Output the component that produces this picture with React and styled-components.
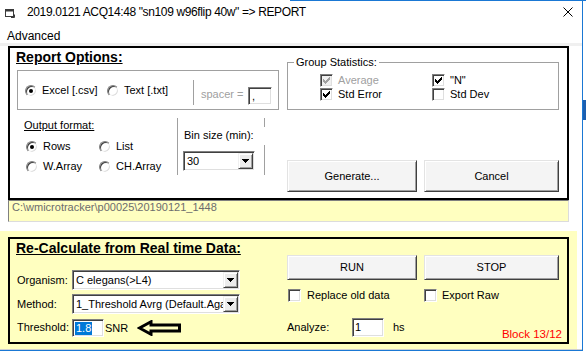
import React from 'react';
import styled, { createGlobalStyle } from 'styled-components';

const BLUE = '#1a78d4';
const YELLOW = '#ffffc0';

const GlobalStyle = createGlobalStyle`
  html, body { margin: 0; padding: 0; background: #fff; }
  body {
    font-family: "Liberation Sans", Arial, sans-serif;
    font-size: 11px;
    line-height: 13px;
    color: #000;
  }
  * { box-sizing: border-box; }
`;

const Page = styled.div`
  display: flex;
  width: 586px;
  height: 353px;
  overflow: hidden;
  background: linear-gradient(${BLUE}, ${BLUE}) 290px 0 / 100% 1px no-repeat, #fff;
`;

const Window = styled.div`
  width: 583px;
  height: 351px;
  flex: none;
  display: flex;
  flex-direction: column;
  border-right: 1px solid ${BLUE};
  border-bottom: 1px solid ${BLUE};
`;

const SideStrip = styled.div`
  flex: 1;
  display: flex;
  flex-direction: column;
  padding-top: 100px;
`;

const SideBlock = styled.div`
  height: 20px;
  background: #1c5fb0;
`;

const TitleBar = styled.div`
  height: 24px;
  flex: none;
  display: flex;
  align-items: center;
  padding: 0 9px 0 5px;
  font-size: 12px;
  line-height: 16px;
  letter-spacing: -0.37px;
`;

const IconSvg = styled.svg`
  flex: none;
  margin: 3px 12px 0 0;
`;

const TitleText = styled.div`
  flex: 1;
  white-space: nowrap;
`;

const MenuBar = styled.div`
  height: 22px;
  flex: none;
  background: #fff;
  border-bottom: 3px solid #f0f0f0;
  padding: 5px 0 0 7px;
  font-size: 12px;
  line-height: 14px;
`;

const Form = styled.div`
  flex: 1;
  display: flex;
  flex-direction: column;
  align-items: flex-start;
  background: #fff;
  border-bottom: 1px solid #cfcfcf;
`;

const Frame = styled.div`
  width: 561px;
  height: ${(p) => p.$h}px;
  margin-left: ${(p) => p.$ml ?? 8}px;
  border: 2px solid #000;
  display: flex;
  gap: 7px;
  padding: 0 8px 0 6px;
  flex: none;
`;

const Col = styled.div`
  width: ${(p) => p.$w}px;
  flex: none;
  display: flex;
  flex-direction: column;
  padding-top: ${(p) => p.$pt || 0}px;
`;

const Heading = styled.div`
  font-size: 14px;
  font-weight: bold;
  line-height: 18px;
  text-decoration: underline;
  text-underline-offset: 1px;
  white-space: nowrap;
`;

const FormatBox = styled.div`
  margin: 4px 0 0 1px;
  width: 262px;
  height: 40px;
  border: 1px solid #a0a0a0;
  display: flex;
  align-items: flex-start;
  padding-left: 7px;
`;

const OptItem = styled.div`
  display: flex;
  align-items: center;
  gap: ${(p) => p.$gap ?? 5}px;
  height: 13px;
  width: ${(p) => (p.$w ? `${p.$w}px` : 'auto')};
  margin-top: ${(p) => p.$mt || 0}px;
  white-space: nowrap;
  flex: none;
  color: ${(p) => (p.$disabled ? '#a0a0a0' : '#000')};
`;

const RadioCircle = styled.span`
  width: 12px;
  height: 12px;
  border-radius: 50%;
  border: 1px solid;
  border-color: #808080 #fff #fff #808080;
  box-shadow: inset 1px 1px 0 #404040, inset -1px -1px 0 #dfdfdf;
  background: #fff;
  display: grid;
  place-items: center;
  flex: none;
`;

const Dot = styled.span`
  width: 4px;
  height: 4px;
  border-radius: 50%;
  background: #000;
`;

const CheckBox = styled.span`
  width: 13px;
  height: 13px;
  border: 1px solid;
  border-color: #808080 #fff #fff #808080;
  box-shadow: inset 1px 1px 0 #404040, inset -1px -1px 0 #dfdfdf;
  background: ${(p) => (p.$disabled ? '#f0f0f0' : '#fff')};
  display: grid;
  place-items: center;
  flex: none;
`;

const VRule = styled.div`
  width: 1px;
  height: ${(p) => p.$h}px;
  margin-top: ${(p) => p.$mt || 0}px;
  background: #a0a0a0;
  flex: none;
`;

const GreyLabel = styled.div`
  width: ${(p) => p.$w}px;
  margin: ${(p) => p.$mt || 0}px 0 0 ${(p) => p.$ml || 0}px;
  color: #a0a0a0;
  white-space: nowrap;
  flex: none;
`;

const Field = styled.div`
  width: ${(p) => p.$w}px;
  height: ${(p) => p.$h}px;
  margin-top: ${(p) => p.$mt || 0}px;
  border: 1px solid;
  border-color: #808080 #fff #fff #808080;
  box-shadow: inset 1px 1px 0 #404040, inset -1px -1px 0 #dfdfdf;
  background: #fff;
  padding: 1px;
  display: flex;
  align-items: center;
  overflow: hidden;
  white-space: nowrap;
  flex: none;
`;

const FieldText = styled.span`
  flex: 1;
  min-width: 0;
  overflow: hidden;
  padding-left: ${(p) => p.$pl ?? 2}px;
`;

const Selected = styled.span`
  margin-left: 1px;
  padding: 0 1px;
  background: #0078d7;
  color: #fff;
`;

const DropBtn = styled.span`
  width: 15px;
  align-self: stretch;
  flex: none;
  background: #ececec;
  border: 1px solid;
  border-color: #f0f0f0 #404040 #404040 #f0f0f0;
  box-shadow: inset 1px 1px 0 #fff, inset -1px -1px 0 #a0a0a0;
  display: grid;
  place-items: center;
`;

const Row = styled.div`
  display: flex;
  align-items: ${(p) => p.$align || 'flex-start'};
  margin-top: ${(p) => p.$mt || 0}px;
  gap: ${(p) => p.$gap || 0}px;
`;

const SubCol = styled.div`
  width: ${(p) => p.$w}px;
  flex: none;
  display: flex;
  flex-direction: column;
  align-items: flex-start;
  padding-left: ${(p) => p.$pl || 0}px;
`;

const UnderLabel = styled.div`
  text-decoration: underline;
  text-underline-offset: 1px;
  white-space: nowrap;
`;

const RadioGrid = styled.div`
  display: grid;
  grid-template-columns: 73px auto;
  row-gap: 7px;
  margin-top: 8px;
  padding-left: 2px;
`;

const PlainLabel = styled.div`
  margin: ${(p) => p.$mt || 0}px 0 0 ${(p) => p.$ml || 0}px;
  white-space: nowrap;
`;

const RuleStack = styled.div`
  display: flex;
  flex-direction: column;
  gap: 18px;
  margin-top: -1px;
`;

const GroupBox = styled.fieldset`
  margin: 8px 0 0;
  padding: 5px 0 8px;
  border: 1px solid #a0a0a0;
  min-width: 0;
`;

const Legend = styled.legend`
  margin-left: 6px;
  padding: 0 2px;
  line-height: 13px;
`;

const CheckGrid = styled.div`
  display: grid;
  grid-template-columns: ${(p) => p.$c1}px auto;
  row-gap: 1px;
  padding-left: ${(p) => p.$pl}px;
  margin-top: ${(p) => p.$mt || 0}px;
`;

const ButtonRow = styled.div`
  display: flex;
  gap: 7px;
  margin-top: ${(p) => (p.$auto ? 'auto' : '0')};
  padding-bottom: ${(p) => p.$pb || 0}px;
`;

const WinButton = styled.button`
  width: ${(p) => p.$w}px;
  height: ${(p) => p.$h}px;
  padding: 0;
  font: inherit;
  color: #000;
  background: #f4f4f4;
  border: 1px solid;
  border-color: #e3e3e3 #404040 #404040 #e3e3e3;
  box-shadow: inset 1px 1px 0 #fff, inset -1px -1px 0 #a0a0a0;
`;

const PathBox = styled.div`
  margin-left: 8px;
  width: 561px;
  height: 22px;
  flex: none;
  background: ${YELLOW};
  border: 1px solid;
  border-color: #808080 #dcdcdc #dcdcdc #808080;
  padding: 0 3px;
  line-height: 13px;
  color: #6d6d6d;
  white-space: nowrap;
`;

const YellowPanel = styled.div`
  margin-top: 9px;
  width: 577px;
  height: 118px;
  flex: none;
  background: ${YELLOW};
  padding: 6px 0 0 8px;
`;

const FieldGrid = styled.div`
  display: grid;
  grid-template-columns: 55px auto;
  row-gap: 4px;
  align-items: center;
  margin: 13px 0 0 1px;
`;

const InlineRow = styled.div`
  display: flex;
  align-items: center;
  margin-top: ${(p) => p.$mt || 0}px;
`;

const Gap = styled.span`
  width: ${(p) => p.$w}px;
  flex: none;
`;

const LabelBox = styled.div`
  width: ${(p) => p.$w}px;
  flex: none;
  white-space: nowrap;
`;

const BlockText = styled.div`
  margin-left: auto;
  margin-right: -3px;
  margin-bottom: -4px;
  align-self: flex-end;
  color: #ff0000;
  font-size: 11.5px;
  line-height: 14px;
  white-space: nowrap;
`;

function Radio({ checked, label, ...rest }) {
  return (
    <OptItem {...rest}>
      <RadioCircle>{checked && <Dot />}</RadioCircle>
      <span>{label}</span>
    </OptItem>
  );
}

function Check({ checked, disabled, label, ...rest }) {
  return (
    <OptItem $disabled={disabled} {...rest}>
      <CheckBox $disabled={disabled}>
        {checked && (
          <svg width="7" height="7" viewBox="0 0 7 7" shapeRendering="crispEdges">
            <path
              d="M6 0h1v3h-1v1h-1v1h-1v1h-1v1h-1v-1h-1v-1h-1v-3h1v1h1v1h1v-1h1v-1h1z"
              fill={disabled ? '#a0a0a0' : '#000'}
            />
          </svg>
        )}
      </CheckBox>
      <span>{label}</span>
    </OptItem>
  );
}

function Combo({ w, h, text }) {
  return (
    <Field $w={w} $h={h}>
      <FieldText>{text}</FieldText>
      <DropBtn>
        <svg width="7" height="4" viewBox="0 0 7 4" shapeRendering="crispEdges">
          <path d="M0 0h7v1h-1v1h-1v1h-1v1h-1v-1h-1v-1h-1v-1h-1z" fill="#000" />
        </svg>
      </DropBtn>
    </Field>
  );
}

export default function App() {
  return (
    <>
      <GlobalStyle />
      <Page>
        <Window>
          <TitleBar>
            <IconSvg width="10" height="9" viewBox="0 0 10 9">
              <rect x="0.5" y="0.5" width="8" height="7" fill="none" stroke="#3a3a3a" />
              <rect x="0.5" y="0.5" width="8" height="2" fill="#3a3a3a" />
              <path d="M6 8.5h3.5v-3" fill="none" stroke="#3a3a3a" />
            </IconSvg>
            <TitleText>{'2019.0121 ACQ14:48 "sn109 w96flip 40w" => REPORT'}</TitleText>
            <svg width="10" height="10" viewBox="0 0 10 10">
              <path d="M0.5 0.5L9.5 9.5M9.5 0.5L0.5 9.5" stroke="#000" strokeWidth="1" />
            </svg>
          </TitleBar>
          <MenuBar>Advanced</MenuBar>
          <Form>
            <Frame $h={154}>
              <Col $w={264}>
                <Heading>Report Options:</Heading>
                <FormatBox>
                  <Radio $w={82} $mt={13} checked label="Excel [.csv]" />
                  <Radio $w={86} $mt={13} label="Text [.txt]" />
                  <VRule $h={25} $mt={9} />
                  <GreyLabel $w={47} $mt={17} $ml={7}>spacer =</GreyLabel>
                  <Field $w={24} $h={18} $mt={16}>
                    <FieldText>,</FieldText>
                  </Field>
                </FormatBox>
                <Row $mt={9}>
                  <SubCol $w={161} $pl={8}>
                    <UnderLabel>Output format:</UnderLabel>
                    <RadioGrid>
                      <Radio checked label="Rows" />
                      <Radio label="List" />
                      <Radio label="W.Array" />
                      <Radio label="CH.Array" />
                    </RadioGrid>
                  </SubCol>
                  <VRule $h={57} $mt={-1} />
                  <SubCol $w={86} $pl={5}>
                    <PlainLabel $mt={10} $ml={1}>Bin size (min):</PlainLabel>
                    <Row $mt={9}>
                      <Combo w={72} h={20} text="30" />
                    </Row>
                  </SubCol>
                  <RuleStack>
                    <VRule $h={9} />
                    <VRule $h={30} />
                  </RuleStack>
                </Row>
              </Col>
              <Col $w={272}>
                <GroupBox>
                  <Legend>Group Statistics:</Legend>
                  <CheckGrid $c1={112} $pl={32}>
                    <Check checked disabled label="Average" />
                    <Check checked label={'"N"'} />
                    <Check checked label="Std Error" />
                    <Check label="Std Dev" />
                  </CheckGrid>
                </GroupBox>
                <ButtonRow $auto $pb={6}>
                  <WinButton $w={130} $h={32}>Generate...</WinButton>
                  <WinButton $w={135} $h={32}>Cancel</WinButton>
                </ButtonRow>
              </Col>
            </Frame>
            <PathBox>{'C:\\wmicrotracker\\p00025\\20190121_1448'}</PathBox>
            <YellowPanel>
              <Frame $h={107} $ml={0}>
                <Col $w={264}>
                  <Heading>Re-Calculate from Real time Data:</Heading>
                  <FieldGrid>
                    <span>Organism:</span>
                    <Combo w={168} h={20} text={'C elegans(>L4)'} />
                    <span>Method:</span>
                    <Combo w={168} h={20} text="1_Threshold Avrg (Default.Aga" />
                    <span>Threshold:</span>
                    <InlineRow $mt={1}>
                      <Field $w={32} $h={18}>
                        <Selected>1.8</Selected>
                      </Field>
                      <Gap $w={1} />
                      <span>SNR</span>
                      <Gap $w={9} />
                      <svg width="45" height="16" viewBox="0 0 45 16">
                        <path
                          d="M2.5 8L14 1.8V5H42.5V11H14V14.2Z"
                          fill="none"
                          stroke="#000"
                          strokeWidth="3"
                          strokeLinejoin="miter"
                        />
                      </svg>
                    </InlineRow>
                  </FieldGrid>
                </Col>
                <Col $w={272} $pt={16}>
                  <ButtonRow>
                    <WinButton $w={130} $h={25}>RUN</WinButton>
                    <WinButton $w={135} $h={25}>STOP</WinButton>
                  </ButtonRow>
                  <CheckGrid $c1={136} $pl={1} $mt={9}>
                    <Check $gap={6} label="Replace old data" />
                    <Check label="Export Raw" />
                  </CheckGrid>
                  <InlineRow $mt={16}>
                    <LabelBox $w={65}>Analyze:</LabelBox>
                    <Field $w={32} $h={19}>
                      <FieldText $pl={1}>1</FieldText>
                    </Field>
                    <Gap $w={9} />
                    <span>hs</span>
                    <BlockText>Block 13/12</BlockText>
                  </InlineRow>
                </Col>
              </Frame>
            </YellowPanel>
          </Form>
        </Window>
        <SideStrip>
          <SideBlock />
        </SideStrip>
      </Page>
    </>
  );
}
